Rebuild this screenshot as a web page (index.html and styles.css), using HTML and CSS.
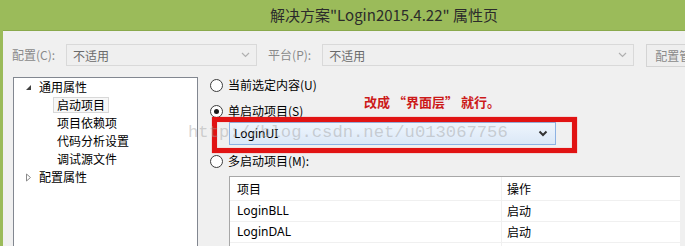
FILE: index.html
```html
<!DOCTYPE html>
<html>
<head>
<meta charset="utf-8">
<link rel="stylesheet" href="styles.css">
</head>
<body>
<div class="titlebar"><span class="title">解决方案"Login2015.4.22" 属性页</span></div>
<div class="frame">
  <div class="toolbar">
    <span class="lbl">配置(C):</span>
    <div class="combo dis w1"><span>不适用</span><svg class="chev" width="9" height="6" viewBox="0 0 9 6"><path d="M1 1 L4.5 4.5 L8 1" fill="none" stroke="#b0b0b0" stroke-width="1.2"/></svg></div>
    <span class="lbl lbl2">平台(P):</span>
    <div class="combo dis w2"><span>不适用</span><svg class="chev" width="9" height="6" viewBox="0 0 9 6"><path d="M1 1 L4.5 4.5 L8 1" fill="none" stroke="#b0b0b0" stroke-width="1.2"/></svg></div>
    <div class="btn">配置管理器(O)...</div>
  </div>
  <div class="main">
    <div class="tree">
      <div class="node l1"><svg class="tri" width="7" height="7" viewBox="0 0 7 7"><path d="M6 1 L6 6 L1 6 Z" fill="#404040"/></svg><span>通用属性</span></div>
      <div class="node l2"><span class="sel">启动项目</span></div>
      <div class="node l2"><span>项目依赖项</span></div>
      <div class="node l2"><span>代码分析设置</span></div>
      <div class="node l2"><span>调试源文件</span></div>
      <div class="node l1"><svg class="tri" width="7" height="9" viewBox="0 0 7 9"><path d="M1.5 1 L5.5 4.5 L1.5 8 Z" fill="none" stroke="#8a8a8a" stroke-width="1"/></svg><span>配置属性</span></div>
    </div>
    <div class="pane">
      <div class="radio-row r1"><span class="radio"></span><span>当前选定内容(U)</span></div>
      <div class="radio-row r2"><span class="radio on"></span><span>单启动项目(S)</span></div>
      <div class="combo single"><span>LoginUI</span><svg class="chev" width="10" height="7" viewBox="0 0 10 7"><path d="M1.5 1.5 L5 5 L8.5 1.5" fill="none" stroke="#333" stroke-width="2"/></svg></div>
      <div class="radio-row r3"><span class="radio"></span><span>多启动项目(M):</span></div>
      <div class="grid">
        <div class="cell head c1">项目</div><div class="cell head c2">操作</div>
        <div class="cell c1">LoginBLL</div><div class="cell c2">启动</div>
        <div class="cell c1">LoginDAL</div><div class="cell c2">启动</div>
        <div class="cell c1"></div><div class="cell c2"></div>
      </div>
    </div>
  </div>
  <div class="redbox"></div>
  <div class="note">改成 “界面层” 就行。</div>
  <div class="watermark">http://blog.csdn.net/u013067756</div>
</div>
</body>
</html>
```
FILE: styles.css
```css
html, body {
  margin: 0;
  padding: 0;
}
body {
  width: 685px;
  height: 246px;
  overflow: hidden;
  background: #9bbb5a;
  font-family: "Noto Sans", "Noto Sans CJK SC", sans-serif;
  font-size: 12px;
  color: #000;
}
.titlebar {
  height: 30px;
  display: flex;
  align-items: center;
  padding-left: 270px;
  box-sizing: border-box;
}
.title {
  font-family: "Noto Sans CJK SC", sans-serif;
  font-size: 15px;
  color: #2b2b2b;
  line-height: 18px;
}
.frame {
  position: relative;
  margin-left: 3px;
  height: 216px;
  background: #f0f0f0;
  overflow: hidden;
  border-top: 1px solid #8aa94c;
  box-sizing: border-box;
}
.toolbar {
  display: flex;
  align-items: center;
  padding: 13px 0 0 9px;
  height: 22px;
  white-space: nowrap;
}
.toolbar > * {
  flex: none;
}
.lbl {
  color: #8a8a8a;
  line-height: 16px;
  font-family: "Noto Sans CJK SC", sans-serif;
}
.lbl2 {
  margin-left: 11px;
}
.combo {
  display: flex;
  align-items: center;
  justify-content: space-between;
  box-sizing: border-box;
  font-family: "Noto Sans CJK SC", sans-serif;
}
.combo.dis {
  height: 22px;
  border: 1px solid #d9d9d9;
  background: #efefef;
  color: #6a6a6a;
  padding: 0 6px 0 6px;
  margin-left: 11px;
}
.w1 { width: 191px; }
.w2 { width: 312px; }
.btn {
  margin-left: 12px;
  height: 23px;
  box-sizing: border-box;
  border: 1px solid #d4d4d4;
  background: #eeeeee;
  color: #8a8a8a;
  padding: 0 8px;
  display: flex;
  align-items: center;
  font-family: "Noto Sans CJK SC", sans-serif;
}
.main {
  display: flex;
  margin-top: 11px;
  padding-left: 10px;
}
.tree {
  width: 185px;
  height: 200px;
  box-sizing: border-box;
  border: 1px solid #828790;
  background: #fff;
  font-family: "Noto Sans CJK SC", sans-serif;
  flex: none;
}
.node {
  height: 18px;
  display: flex;
  align-items: center;
  line-height: 16px;
}
.node.l1 {
  padding-left: 11px;
}
.node.l1 .tri {
  width: 7px;
  margin-right: 7px;
}
.node.l2 {
  padding-left: 39px;
}
.sel {
  border: 1px solid #d8d8d8;
  background: #f7f7f7;
  padding: 0 3px;
  line-height: 14px;
}
.node.l2 span:not(.sel) {
  padding-left: 4px;
}
.pane {
  margin-left: 10px;
  display: flex;
  flex-direction: column;
  align-items: flex-start;
}
.radio-row {
  display: flex;
  align-items: center;
  height: 16px;
  font-family: "Noto Sans", "Noto Sans CJK SC", sans-serif;
  line-height: 16px;
}
.radio-row span:last-child {
  font-family: "Noto Sans CJK SC", sans-serif;
}
.r1 { margin-top: 0; }
.r2 { margin-top: 10px; }
.r3 { margin-top: 8px; }
.radio {
  width: 13px;
  height: 13px;
  box-sizing: border-box;
  border: 1px solid #3c3c3c;
  border-radius: 50%;
  background: #fff;
  margin: 0 5px 0 2px;
  display: flex;
  align-items: center;
  justify-content: center;
}
.radio.on::after {
  content: "";
  width: 5px;
  height: 5px;
  border-radius: 50%;
  background: #1a1a1a;
}
.combo.single {
  margin: 3px 0 0 21px;
  width: 327px;
  height: 23px;
  border: 1px solid #8db2e3;
  background: linear-gradient(#eef5fd, #dbe8f7);
  padding: 0 7px 0 4px;
  font-family: "Noto Sans", sans-serif;
}
.grid {
  margin: 7px 0 0 21px;
  width: 451px;
  display: grid;
  grid-template-columns: 272px 1fr;
  border: 1px solid #a7a7a7;
  border-right: none;
  background: #fff;
  box-sizing: border-box;
}
.cell {
  height: 20px;
  line-height: 20px;
  padding-left: 7px;
  border-bottom: 1px solid #f0f0f0;
  font-family: "Noto Sans", "Noto Sans CJK SC", sans-serif;
  white-space: nowrap;
}
.cell.head {
  height: 23px;
  line-height: 23px;
  font-family: "Noto Sans CJK SC", sans-serif;
}
.cell.c1 {
  border-right: 1px solid #f0f0f0;
}
.cell.c2 {
  font-family: "Noto Sans CJK SC", sans-serif;
  padding-left: 5px;
}
.redbox {
  position: absolute;
  left: 209px;
  top: 86px;
  width: 365px;
  height: 36px;
  box-sizing: border-box;
  border: 5px solid #e11313;
  box-shadow: 0 0 1px #f06060, inset 0 0 1px #f06060;
}
.note {
  position: absolute;
  left: 361px;
  top: 63px;
  font-family: "Noto Sans CJK SC", sans-serif;
  font-weight: bold;
  font-size: 13px;
  line-height: 16px;
  color: #cc1a1a;
  white-space: nowrap;
}
.watermark {
  position: absolute;
  left: 185px;
  top: 93px;
  font-family: "Liberation Mono", monospace;
  font-size: 17.2px;
  line-height: 17px;
  color: rgba(160, 160, 160, 0.45);
  white-space: nowrap;
}
```
